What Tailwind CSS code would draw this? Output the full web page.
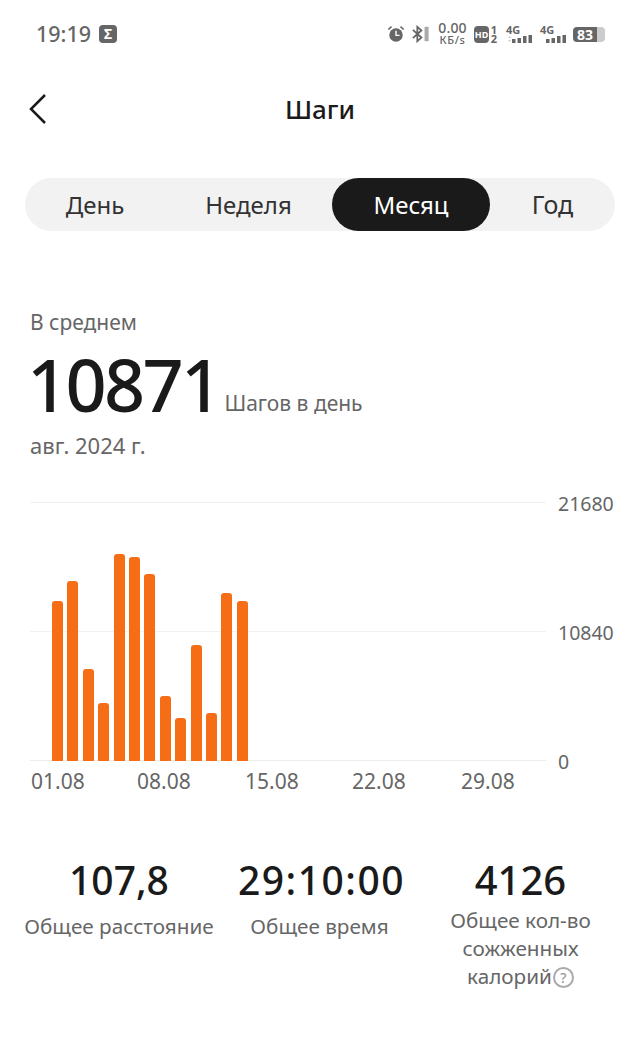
<!DOCTYPE html>
<html lang="ru">
<head>
  <meta charset="UTF-8" />
  <meta name="viewport" content="width=device-width, initial-scale=1.0"/>
  <title>Шаги</title>
  <script src="https://cdn.jsdelivr.net/npm/@tailwindcss/browser@4"></script>
</head>
<body class="bg-white font-['Noto_Sans',sans-serif] text-[#1a1a1a] w-[640px] h-[1048px] overflow-hidden">

  <!-- Status bar -->
  <div class="h-[68px] pl-[36px] pr-[35px] flex items-center justify-between text-[#666]">
    <div class="flex items-center gap-[8px]">
      <span class="text-[21.500px] font-medium leading-none">19:19</span>
      <span class="w-[18px] h-[18px] rounded-[4px] bg-[#666] text-white text-[14px] font-bold leading-[18px] text-center">Σ</span>
    </div>
    <div class="flex items-center h-[24px]">
      <svg width="18" height="18" viewBox="0 0 20 20" class="mr-[6px]"><circle cx="10" cy="11" r="7.500" fill="#666"/><path d="M10 6.500V11.500H14" stroke="#fff" stroke-width="1.600" fill="none"/><path d="M1.500 5L5 1.800M18.500 5L15 1.800" stroke="#666" stroke-width="1.800"/></svg>
      <svg width="19" height="18" viewBox="0 0 20 20" class="mr-[8px]"><path d="M1.500 5.500L11 14L6.500 18V2L11 6L1.500 14.500" stroke="#666" stroke-width="2" fill="none"/><rect x="14.500" y="2" width="4.500" height="16" fill="#aaa"/></svg>
      <div class="w-[29px] mr-[7px] flex flex-col items-center">
        <span class="text-[14px] font-medium leading-[12px] tracking-[0.200px]">0.00</span>
        <span class="text-[11px] font-medium leading-[12px] tracking-[0.600px]">КБ/s</span>
      </div>
      <span class="w-[15px] h-[17px] rounded-[4px] bg-[#666] text-white text-[9px] font-bold leading-[17px] text-center">HD</span>
      <div class="w-[10px] mr-[7px] flex flex-col items-center text-[11px] font-bold leading-[9px]"><span>1</span><span>2</span></div>
      <div class="w-[27px] mr-[7px] flex flex-col">
        <span class="text-[11px] font-bold leading-[9px]">4G</span>
        <svg width="27" height="9" viewBox="0 0 27 9"><path d="M2 4L3.500 2L5 4ZM2 6L3.500 8L5 6Z" fill="#ccc"/><rect x="6" y="5" width="3.500" height="4" fill="#666"/><rect x="11.500" y="4" width="3.500" height="5" fill="#666"/><rect x="17" y="2" width="3.500" height="7" fill="#666"/><rect x="22.500" y="1" width="3.500" height="8" fill="#666"/></svg>
      </div>
      <div class="w-[27px] mr-[6px] flex flex-col">
        <span class="text-[11px] font-bold leading-[9px]">4G</span>
        <svg width="27" height="9" viewBox="0 0 27 9"><rect x="6" y="5" width="3.500" height="4" fill="#666"/><rect x="11.500" y="4" width="3.500" height="5" fill="#666"/><rect x="17" y="2" width="3.500" height="7" fill="#666"/><rect x="22.500" y="1" width="3.500" height="8" fill="#666"/></svg>
      </div>
      <div class="flex items-center">
        <span class="w-[24px] h-[15px] rounded-l-[4px] bg-[#666] text-white text-[14px] font-bold leading-[15px] text-center">83</span>
        <span class="w-[8px] h-[15px] bg-[#ccc] rounded-r-[4px]"></span>
      </div>
    </div>
  </div>

  <!-- Title -->
  <div class="h-[82px] pl-[28px] flex items-center relative">
    <svg width="20" height="32" viewBox="0 0 20 32"><path d="M17 2L3 16L17 30" stroke="#1a1a1a" stroke-width="2.500" fill="none"/></svg>
    <h1 class="absolute inset-x-0 text-center text-[26px] font-medium leading-none">Шаги</h1>
  </div>

  <!-- Period tabs -->
  <div class="mt-[28px] mx-[25px] h-[53px] rounded-full bg-[#f2f2f2] grid grid-cols-[140px_167px_158px_125px] text-center text-[24px] leading-[53px] text-[#333]">
    <span>День</span>
    <span>Неделя</span>
    <span class="rounded-full bg-[#1a1a1a] text-white">Месяц</span>
    <span class="text-[25px]">Год</span>
  </div>

  <!-- Summary -->
  <div class="mt-[77px] px-[30px]">
    <div class="text-[21px] leading-[28px] text-[#666]">В среднем</div>
    <div class="flex items-end mt-[13px] h-[70px]">
      <span class="-ml-[3px] text-[72px] font-medium leading-[70px] tracking-[-2.700px]">10871</span>
      <span class="ml-[5px] mb-[2px] text-[21px] leading-[28px] text-[#666]">Шагов в день</span>
    </div>
    <div class="mt-[12px] text-[22px] leading-[28px] text-[#666]">авг. 2024 г.</div>
  </div>

  <!-- Chart -->
  <div class="mt-[43px] ml-[30px] mr-[26px] relative h-[259px] flex flex-col justify-between">
    <div class="h-px bg-[#f1f1f1] w-[516px] relative"><span class="absolute left-[528px] -top-[8px] text-[19.500px] text-[#666] leading-none">21680</span></div>
    <div class="h-px bg-[#f1f1f1] w-[516px] relative"><span class="absolute left-[528px] -top-[8px] text-[19.500px] text-[#666] leading-none">10840</span></div>
    <div class="h-px bg-[#ececec] w-[516px] relative"><span class="absolute left-[528px] -top-[8px] text-[19.500px] text-[#666] leading-none">0</span></div>
    <div class="absolute left-[22px] bottom-0 flex items-end gap-[4.400px]">
      <div class="w-[11px] h-[160px] bg-[#f56e16] rounded-t-[3px]"></div>
      <div class="w-[11px] h-[180px] bg-[#f56e16] rounded-t-[3px]"></div>
      <div class="w-[11px] h-[92px] bg-[#f56e16] rounded-t-[3px]"></div>
      <div class="w-[11px] h-[58px] bg-[#f56e16] rounded-t-[3px]"></div>
      <div class="w-[11px] h-[207px] bg-[#f56e16] rounded-t-[3px]"></div>
      <div class="w-[11px] h-[204px] bg-[#f56e16] rounded-t-[3px]"></div>
      <div class="w-[11px] h-[187px] bg-[#f56e16] rounded-t-[3px]"></div>
      <div class="w-[11px] h-[65px] bg-[#f56e16] rounded-t-[3px]"></div>
      <div class="w-[11px] h-[43px] bg-[#f56e16] rounded-t-[3px]"></div>
      <div class="w-[11px] h-[116px] bg-[#f56e16] rounded-t-[3px]"></div>
      <div class="w-[11px] h-[48px] bg-[#f56e16] rounded-t-[3px]"></div>
      <div class="w-[11px] h-[168px] bg-[#f56e16] rounded-t-[3px]"></div>
      <div class="w-[11px] h-[160px] bg-[#f56e16] rounded-t-[3px]"></div>
    </div>
  </div>
  <div class="mt-[6px] ml-[31px] grid grid-cols-[106px_108px_107px_109px_60px] text-[21px] leading-[28px] text-[#666]">
    <span>01.08</span><span>08.08</span><span>15.08</span><span>22.08</span><span>29.08</span>
  </div>

  <!-- Totals -->
  <div class="mt-[60px] grid grid-cols-[238px_163px_239px] text-center">
    <div>
      <div class="text-[39px] font-medium leading-[50px]">107,8</div>
      <div class="mt-[7px] text-[20.700px] leading-[28px] text-[#666]">Общее расстояние</div>
    </div>
    <div>
      <div class="text-[39px] font-medium leading-[50px] tracking-[1.500px]">29:10:00</div>
      <div class="mt-[7px] text-[20.700px] leading-[28px] text-[#666]">Общее время</div>
    </div>
    <div>
      <div class="text-[40px] font-medium leading-[50px]">4126</div>
      <div class="mt-[1px] text-[20.700px] leading-[28px] text-[#666]">Общее кол-во<br>сожженных<br>калорий<span class="inline-block align-[1px] ml-[1px] w-[21px] h-[21px] rounded-full border-2 border-[#aaa] text-[#999] text-[14px] font-medium leading-[17px]">?</span></div>
    </div>
  </div>
</body>
</html>
